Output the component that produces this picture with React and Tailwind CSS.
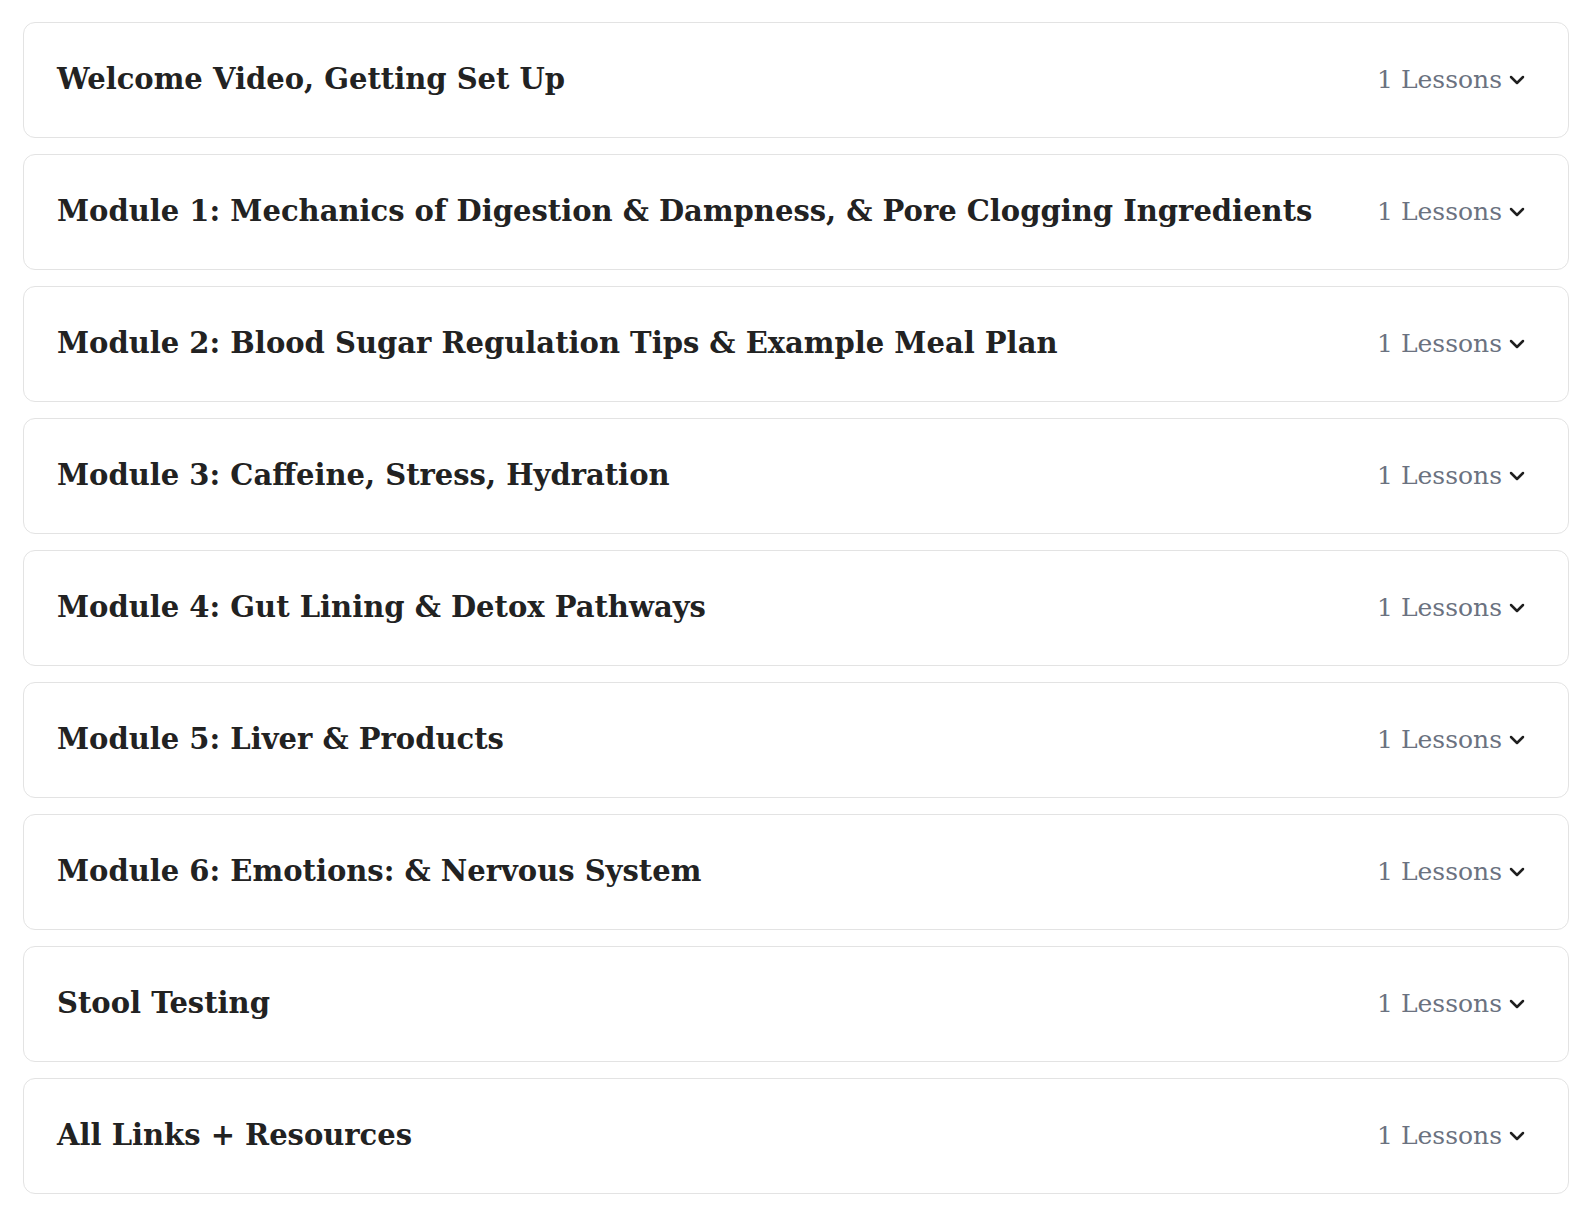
import { ChevronDown } from "lucide-react";

const MODULES = [
  "Welcome Video, Getting Set Up",
  "Module 1: Mechanics of Digestion & Dampness, & Pore Clogging Ingredients",
  "Module 2: Blood Sugar Regulation Tips & Example Meal Plan",
  "Module 3: Caffeine, Stress, Hydration",
  "Module 4: Gut Lining & Detox Pathways",
  "Module 5: Liver & Products",
  "Module 6: Emotions: & Nervous System",
  "Stool Testing",
  "All Links + Resources",
];

function ModuleRow({ title, lessons }) {
  return (
    <div className="flex h-[116px] items-center justify-between gap-8 rounded-xl border border-[#e3e3e3] bg-white pl-[33px] pr-[39px]">
      <h3 className="text-[29px] font-bold text-[#222]">{title}</h3>
      <div className="flex shrink-0 items-center gap-[3px]">
        <span className="text-[25px] text-[#6b7280]">{lessons} Lessons</span>
        <ChevronDown size={24} strokeWidth={2.5} className="text-[#1f1f1f]" />
      </div>
    </div>
  );
}

function App() {
  return (
    <div
      className="min-h-screen bg-white px-[23px] pt-[22px]"
      style={{ fontFamily: '"DejaVu Serif", "Liberation Serif", serif' }}
    >
      <div className="flex flex-col gap-4">
        {MODULES.map((title) => (
          <ModuleRow key={title} title={title} lessons={1} />
        ))}
      </div>
    </div>
  );
}

export default App;
